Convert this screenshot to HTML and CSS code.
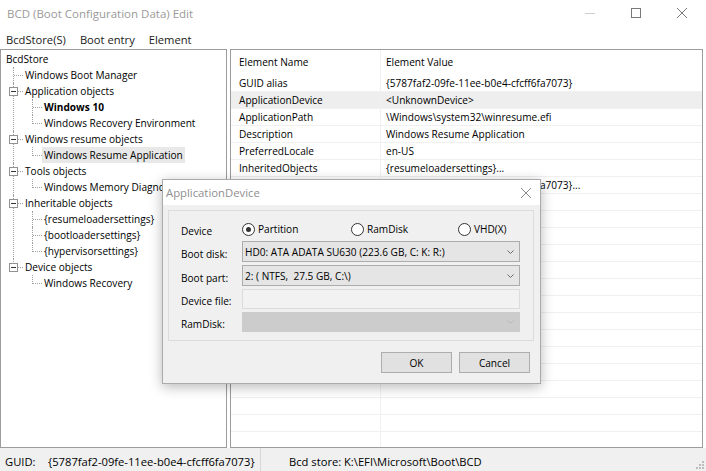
FILE: index.html
```html
<!DOCTYPE html>
<html>
<head>
<meta charset="utf-8">
<title>BCD Edit</title>
<link rel="stylesheet" href="styles.css">
</head>
<body>
<div class="window">
  <header class="titlebar">
    <span class="title">BCD (Boot Configuration Data) Edit</span>
    <div class="caption">
      <span class="cbtn"><svg width="10" height="10" viewBox="0 0 10 10"><path d="M0 5.5H10" stroke="#cfcfcf" stroke-width="1"/></svg></span>
      <span class="cbtn"><svg width="10" height="10" viewBox="0 0 10 10"><rect x="0.5" y="0.5" width="9" height="9" fill="none" stroke="#7a7a7a" stroke-width="1"/></svg></span>
      <span class="cbtn"><svg width="10" height="10" viewBox="0 0 10 10"><path d="M0 0L10 10M10 0L0 10" stroke="#7a7a7a" stroke-width="1"/></svg></span>
    </div>
  </header>
  <nav class="menubar"><span>BcdStore(S)</span><span>Boot entry</span><span>Element</span></nav>
  <main class="main">
    <div class="tree">
      <div class="row root"><span class="lbl">BcdStore</span></div>
      <ul class="lvl1">
        <li><div class="row"><span class="lbl">Windows Boot Manager</span></div></li>
        <li><i class="exp"></i><div class="row"><span class="lbl">Application objects</span></div>
          <ul class="lvl2">
            <li><div class="row"><span class="lbl bold">Windows 10</span></div></li>
            <li><div class="row"><span class="lbl">Windows Recovery Environment</span></div></li>
          </ul>
        </li>
        <li><i class="exp"></i><div class="row"><span class="lbl">Windows resume objects</span></div>
          <ul class="lvl2">
            <li><div class="row"><span class="lbl sel">Windows Resume Application</span></div></li>
          </ul>
        </li>
        <li><i class="exp"></i><div class="row"><span class="lbl">Tools objects</span></div>
          <ul class="lvl2">
            <li><div class="row"><span class="lbl">Windows Memory Diagnostic</span></div></li>
          </ul>
        </li>
        <li><i class="exp"></i><div class="row"><span class="lbl">Inheritable objects</span></div>
          <ul class="lvl2">
            <li><div class="row"><span class="lbl">{resumeloadersettings}</span></div></li>
            <li><div class="row"><span class="lbl">{bootloadersettings}</span></div></li>
            <li><div class="row"><span class="lbl">{hypervisorsettings}</span></div></li>
          </ul>
        </li>
        <li><i class="exp"></i><div class="row"><span class="lbl">Device objects</span></div>
          <ul class="lvl2">
            <li><div class="row"><span class="lbl">Windows Recovery</span></div></li>
          </ul>
        </li>
      </ul>
    </div>
    <div class="list">
      <div class="lrow head"><span class="c1">Element Name</span><span class="c2">Element Value</span></div>
      <div class="lrow"><span class="c1">GUID alias</span><span class="c2">{5787faf2-09fe-11ee-b0e4-cfcff6fa7073}</span></div>
      <div class="lrow hl"><span class="c1">ApplicationDevice</span><span class="c2">&lt;UnknownDevice&gt;</span></div>
      <div class="lrow"><span class="c1">ApplicationPath</span><span class="c2">\Windows\system32\winresume.efi</span></div>
      <div class="lrow"><span class="c1">Description</span><span class="c2">Windows Resume Application</span></div>
      <div class="lrow"><span class="c1">PreferredLocale</span><span class="c2">en-US</span></div>
      <div class="lrow"><span class="c1">InheritedObjects</span><span class="c2">{resumeloadersettings}...</span></div>
      <div class="lrow"><span class="c1">RecoverySequence</span><span class="c2">{5787faf2-09fe-11ee-b0e4-cfcff6fa7073}...</span></div>
      <div class="lrow"><span class="c1"></span><span class="c2"></span></div>
      <div class="lrow"><span class="c1"></span><span class="c2"></span></div>
      <div class="lrow"><span class="c1"></span><span class="c2"></span></div>
      <div class="lrow"><span class="c1"></span><span class="c2"></span></div>
      <div class="lrow"><span class="c1"></span><span class="c2"></span></div>
      <div class="lrow"><span class="c1"></span><span class="c2"></span></div>
      <div class="lrow"><span class="c1"></span><span class="c2"></span></div>
      <div class="lrow"><span class="c1"></span><span class="c2"></span></div>
      <div class="lrow"><span class="c1"></span><span class="c2"></span></div>
      <div class="lrow"><span class="c1"></span><span class="c2"></span></div>
      <div class="lrow"><span class="c1"></span><span class="c2"></span></div>
      <div class="lrow"><span class="c1"></span><span class="c2"></span></div>
      <div class="lrow"><span class="c1"></span><span class="c2"></span></div>
      <div class="lrow"><span class="c1"></span><span class="c2"></span></div>
      <div class="lrow"><span class="c1"></span><span class="c2"></span></div>
    </div>
  </main>
  <footer class="status">
    <div class="scell sc1"><span>GUID:</span><span>{5787faf2-09fe-11ee-b0e4-cfcff6fa7073}</span></div>
    <div class="scell sc2"><span>Bcd store:</span><span>K:\EFI\Microsoft\Boot\BCD</span></div>
    <svg class="grip" width="9" height="9" viewBox="0 0 9 9"><g fill="#bdbdbd"><rect x="7" y="1" width="2" height="2"/><rect x="4" y="4" width="2" height="2"/><rect x="7" y="4" width="2" height="2"/><rect x="1" y="7" width="2" height="2"/><rect x="4" y="7" width="2" height="2"/><rect x="7" y="7" width="2" height="2"/></g></svg>
  </footer>

  <div class="dialog">
    <div class="dtitle"><span>ApplicationDevice</span><svg width="10" height="10" viewBox="0 0 10 10"><path d="M0 0L10 10M10 0L0 10" stroke="#8a8a8a" stroke-width="1"/></svg></div>
    <div class="dbody">
      <div class="group">
        <span class="lab">Device</span>
        <div class="radios">
          <span class="radio on"><i></i><span>Partition</span></span>
          <span class="radio"><i></i><span>RamDisk</span></span>
          <span class="radio"><i></i><span>VHD(X)</span></span>
        </div>
        <span class="lab">Boot disk:</span>
        <div class="combo"><span>HD0: ATA ADATA SU630 (223.6 GB, C: K: R:)</span><svg width="7" height="4" viewBox="0 0 7 4"><path d="M0.5 0.5L3.5 3.5L6.5 0.5" fill="none" stroke="#6a6a6a" stroke-width="1"/></svg></div>
        <span class="lab">Boot part:</span>
        <div class="combo"><span>2: ( NTFS,&nbsp; 27.5 GB, C:\)</span><svg width="7" height="4" viewBox="0 0 7 4"><path d="M0.5 0.5L3.5 3.5L6.5 0.5" fill="none" stroke="#6a6a6a" stroke-width="1"/></svg></div>
        <span class="lab">Device file:</span>
        <div class="edit"></div>
        <span class="lab">RamDisk:</span>
        <div class="combo dis"><span></span><svg width="7" height="4" viewBox="0 0 7 4"><path d="M0.5 0.5L3.5 3.5L6.5 0.5" fill="none" stroke="#b8b8b8" stroke-width="1"/></svg></div>
      </div>
      <div class="buttons"><button class="btn">OK</button><button class="btn">Cancel</button></div>
    </div>
  </div>
</div>
</body>
</html>
```

FILE: styles.css
```css
body {
  margin: 0;
  background: #fff;
  font-family: "Open Sans", "Noto Sans", sans-serif;
  font-size: 10.1px;
  color: #000;
}

.window {
  position: relative;
  width: 706px;
  height: 471px;
  overflow: hidden;
  background: #fff;
}

/* title bar */
.titlebar {
  display: flex;
  align-items: flex-start;
  height: 30px;
}
.title {
  padding-left: 7px;
  line-height: 28px;
  font-size: 11.5px;
  color: #9a9a9a;
}
.caption {
  margin-left: auto;
  margin-right: 1px;
  display: flex;
}
.cbtn {
  width: 46px;
  height: 26px;
  display: flex;
  align-items: center;
  justify-content: center;
}
.cbtn svg { display: block; }

/* menu */
.menubar {
  display: flex;
  height: 19px;
  gap: 14px;
  padding-left: 6px;
  font-size: 11.2px;
  line-height: 19px;
  color: #1a1a1a;
}

/* main panes */
.main {
  display: flex;
  gap: 3px;
  height: 399px;
}
.tree {
  width: 227px;
  flex: none;
  box-sizing: border-box;
  border: 1px solid #9c9c9c;
  padding-top: 1px;
  overflow: hidden;
  white-space: nowrap;
}
.list {
  width: 473px;
  flex: none;
  box-sizing: border-box;
  border: 1px solid #9c9c9c;
  overflow: hidden;
  white-space: nowrap;
}

/* tree */
.tree ul {
  list-style: none;
  margin: 0;
  padding: 0;
}
.tree .lvl1 { margin-left: 12px; }
.tree .lvl2 { margin-left: 9px; }
.row {
  height: 16px;
  display: flex;
  align-items: center;
}
.lbl {
  padding: 0 2px;
  line-height: 16px;
}
.root { padding-left: 3px; }
.bold { font-weight: 700; }
.sel { background: #e8e8e8; }

.tree li {
  position: relative;
  padding-left: 10px;
}
.tree li::before {
  content: "";
  position: absolute;
  left: 0;
  top: 0;
  bottom: 0;
  border-left: 1px dotted #a0a0a0;
}
.tree li:last-child::before {
  bottom: auto;
  height: 9px;
}
.tree li::after {
  content: "";
  position: absolute;
  left: 1px;
  top: 8px;
  width: 9px;
  border-top: 1px dotted #a0a0a0;
}
.exp {
  position: absolute;
  left: -4px;
  top: 4px;
  width: 7px;
  height: 7px;
  border: 1px solid #919191;
  background: #fff;
  z-index: 1;
}
.exp::after {
  content: "";
  position: absolute;
  left: 1px;
  top: 3px;
  width: 5px;
  height: 1px;
  background: #333;
}

/* list */
.lrow {
  display: flex;
  height: 17px;
  line-height: 16px;
  box-sizing: border-box;
  border-bottom: 1px solid #f0f0f0;
}
.lrow.head {
  height: 25px;
  line-height: 25px;
  border-bottom: none;
}
.c1 {
  flex: none;
  width: 150px;
  box-sizing: border-box;
  padding-left: 8px;
  border-right: 1px solid #f0f0f0;
  overflow: hidden;
}
.c2 { padding-left: 5px; }
.hl { background: #eeeeee; }

/* status bar */
.status {
  display: flex;
  height: 23px;
  background: #f0f0f0;
  font-size: 11.2px;
}
.scell {
  display: grid;
  align-content: start;
  padding-top: 5px;
  line-height: 18px;
  box-sizing: border-box;
}
.sc1 {
  grid-template-columns: 43px auto;
  width: 261px;
  padding-left: 5px;
  border-right: 1px solid #d8d8d8;
}
.sc2 {
  grid-template-columns: 55px auto;
  padding-left: 28px;
}
.grip {
  margin: auto 2px 2px auto;
  display: block;
}

/* dialog */
.dialog {
  position: absolute;
  left: 162px;
  top: 179px;
  width: 379px;
  height: 205px;
  box-sizing: border-box;
  border: 1px solid #aaaaaa;
  background: #fff;
  box-shadow: 0 3px 12px rgba(0, 0, 0, 0.28);
  display: flex;
  flex-direction: column;
}
.dtitle {
  height: 25px;
  flex: none;
  display: flex;
  align-items: center;
  padding: 0 9px 0 3px;
  font-size: 11.3px;
  color: #8f8f8f;
}
.dtitle svg {
  margin-left: auto;
  display: block;
}
.dbody {
  flex: 1;
  background: #f0f0f0;
  padding: 5px 6px 0 5px;
}
.group {
  display: grid;
  grid-template-columns: 73px 278px;
  grid-template-rows: 18px 21px 21px 20px 20px;
  row-gap: 3px;
  padding: 9px 0 8px;
  border: 1px solid #dcdcdc;
}
.lab {
  display: flex;
  align-items: center;
  padding: 4px 0 0 12px;
}
.radios {
  display: grid;
  grid-template-columns: 109px 107px auto;
  align-items: center;
}
.radio {
  display: flex;
  align-items: center;
  gap: 3px;
}
.radio i {
  position: relative;
  width: 11px;
  height: 11px;
  border: 1px solid #333;
  border-radius: 50%;
  background: #fff;
  flex: none;
}
.radio.on i::after {
  content: "";
  position: absolute;
  left: 3px;
  top: 3px;
  width: 5px;
  height: 5px;
  border-radius: 50%;
  background: #333;
}
.combo {
  display: flex;
  align-items: center;
  justify-content: space-between;
  box-sizing: border-box;
  background: #e5e5e5;
  border: 1px solid #acacac;
  padding: 0 5px 0 2px;
}
.combo svg { display: block; }
.combo.dis {
  background: #cccccc;
  border-color: #cccccc;
}
.edit {
  box-sizing: border-box;
  border: 1px solid #dcdcdc;
  background: #f2f2f2;
}
.buttons {
  display: flex;
  justify-content: flex-end;
  gap: 7px;
  margin-top: 11px;
  padding-right: 4px;
}
.btn {
  width: 71px;
  height: 21px;
  padding: 0;
  border: 1px solid #adadad;
  background: #e1e1e1;
  font: inherit;
  color: #000;
}
```
